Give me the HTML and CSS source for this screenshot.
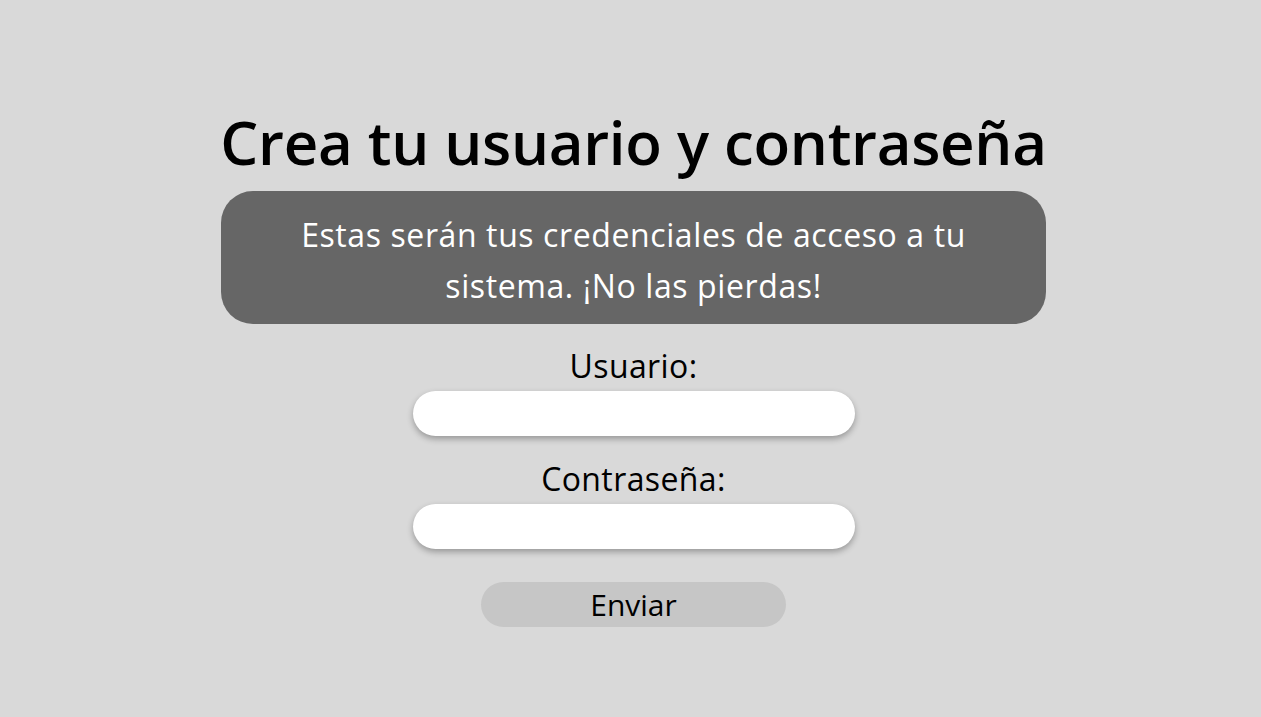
FILE: index.html
```html
<!DOCTYPE html>
<html lang="es">
<head>
<meta charset="utf-8">
<title>Crea tu usuario y contraseña</title>
<link rel="stylesheet" href="styles.css">
</head>
<body>
<main class="page">
  <h1 class="title">Crea tu usuario y contraseña</h1>
  <div class="notice">
    <p class="notice-text">Estas serán tus credenciales de acceso a tu sistema. ¡No las pierdas!</p>
  </div>
  <form class="form">
    <div class="field">
      <label class="label" for="user">Usuario:</label>
      <input class="input" id="user" type="text">
    </div>
    <div class="field">
      <label class="label" for="pass">Contraseña:</label>
      <input class="input" id="pass" type="password">
    </div>
    <button class="submit" type="button">Enviar</button>
  </form>
</main>
</body>
</html>
```
FILE: styles.css
```css
html, body {
  margin: 0;
  padding: 0;
  background: #d9d9d9;
}
body {
  font-family: "Open Sans", "Noto Sans", sans-serif;
  color: #000;
}
.page {
  display: flex;
  flex-direction: column;
  align-items: center;
  padding-top: 107px;
  padding-left: 6px;
}
.title {
  margin: 0;
  font-size: 60px;
  line-height: 70px;
  font-weight: 600;
  letter-spacing: -0.3px;
  white-space: nowrap;
}
.notice {
  margin-top: 14px;
  width: 825px;
  box-sizing: border-box;
  background: #666666;
  border-radius: 32px;
  padding: 18px 60px 13px;
}
.notice-text {
  margin: 0;
  color: #fff;
  font-size: 32px;
  line-height: 51px;
  font-weight: 500;
  letter-spacing: 0.6px;
  text-align: center;
}
.form {
  display: flex;
  flex-direction: column;
  align-items: center;
  margin-top: 24px;
}
.field {
  display: flex;
  flex-direction: column;
  align-items: center;
  gap: 7px;
  margin-bottom: 25px;
}
.label {
  font-size: 32px;
  line-height: 36px;
  font-weight: 500;
  letter-spacing: 0.4px;
}
.input {
  width: 442px;
  height: 45px;
  box-sizing: border-box;
  border: none;
  border-radius: 23px;
  background: #fff;
  box-shadow: 0 3px 6px rgba(0, 0, 0, 0.3);
  padding: 0 20px;
  font-family: inherit;
  font-size: 20px;
  outline: none;
}
.submit {
  margin-top: 8px;
  width: 305px;
  height: 45px;
  border: none;
  border-radius: 23px;
  background: #c6c6c6;
  font-family: inherit;
  font-size: 30px;
  font-weight: 400;
  color: #000;
  padding: 0;
  cursor: pointer;
}
```
